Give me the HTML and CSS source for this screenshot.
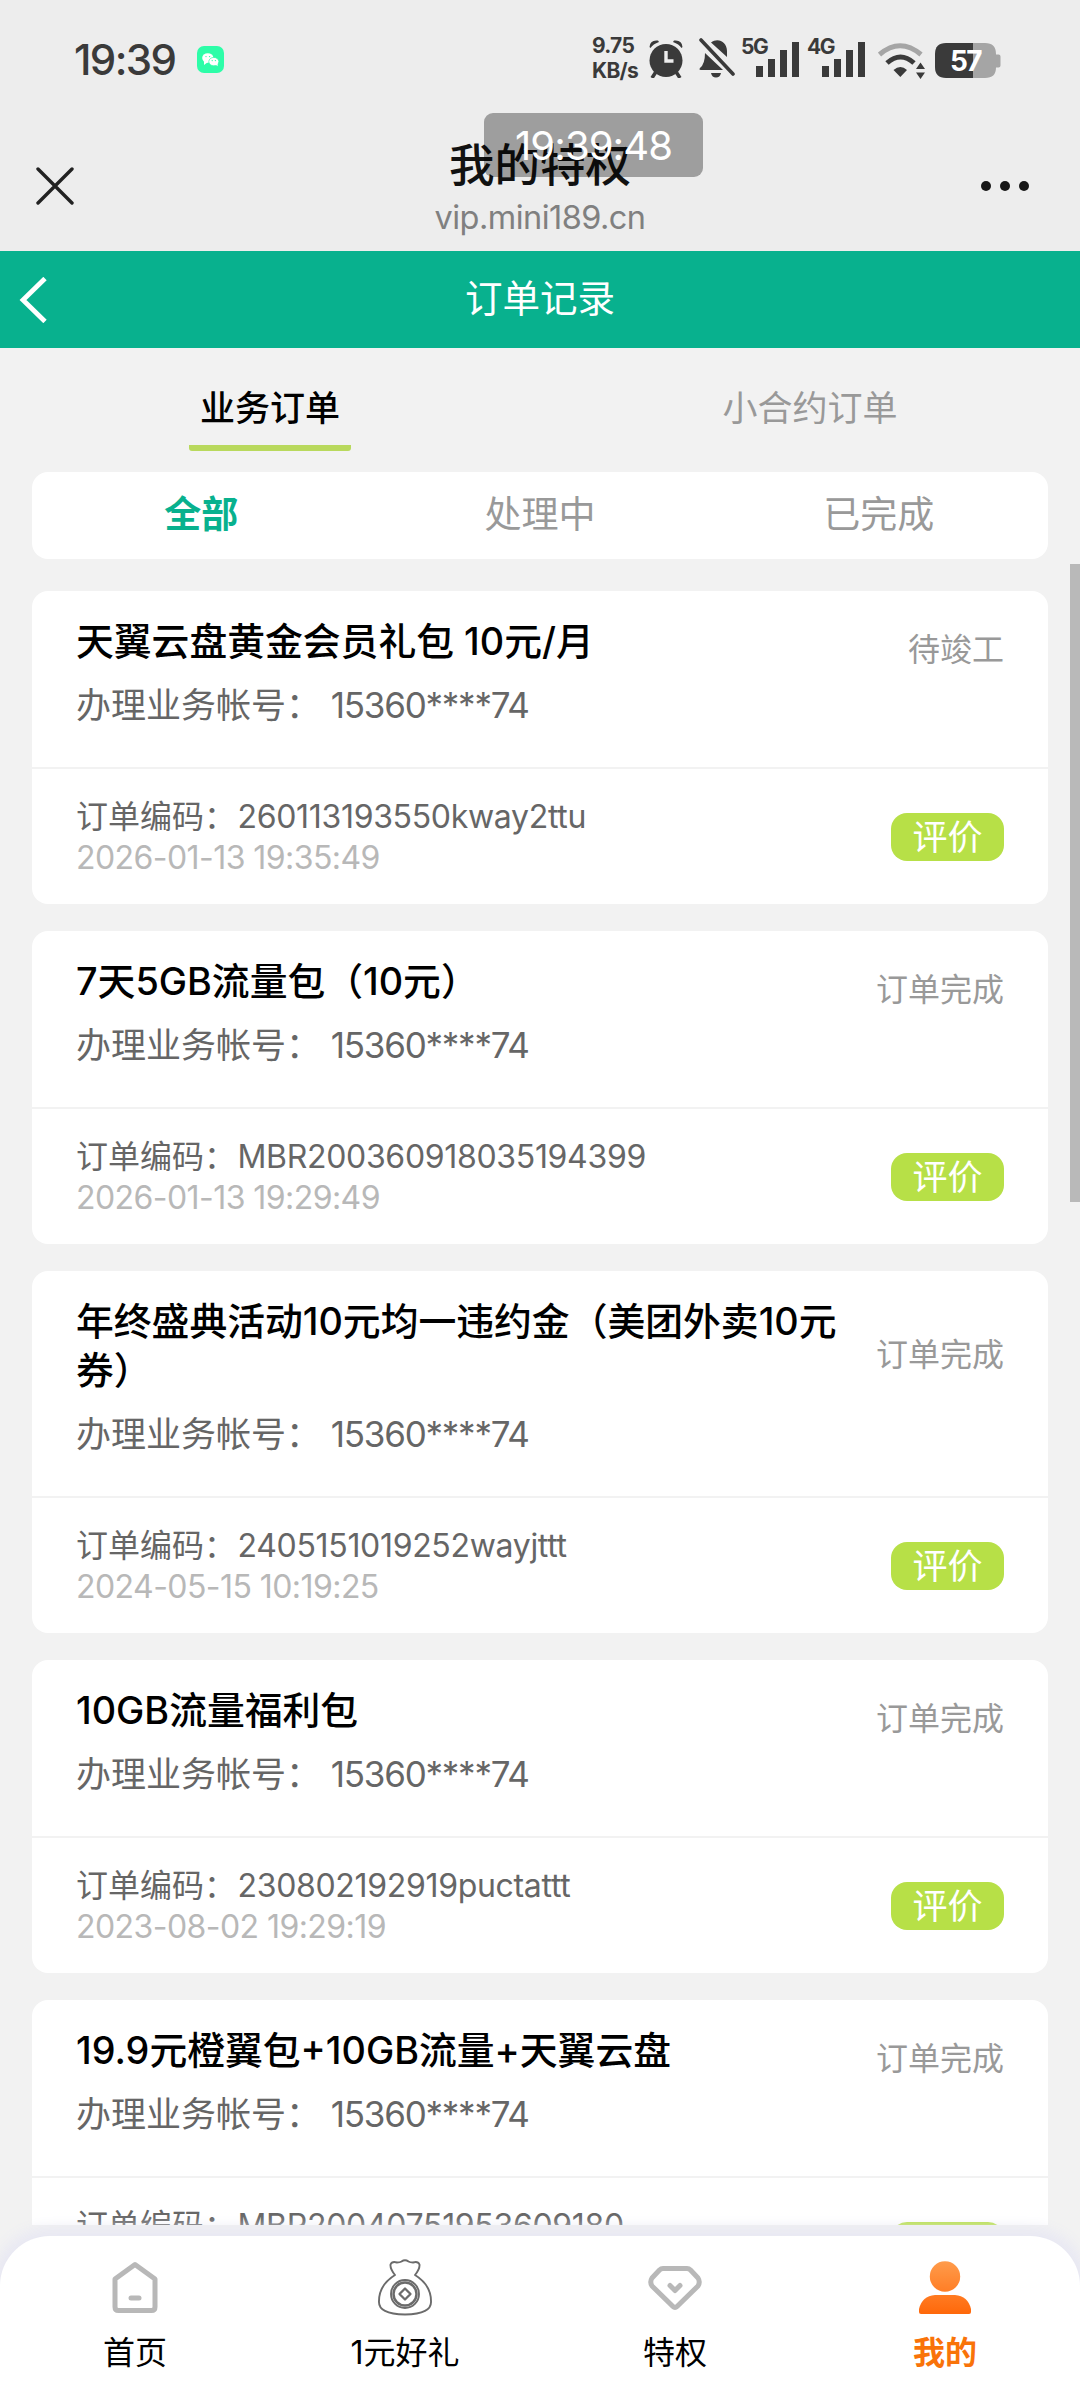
FILE: index.html
```html
<!DOCTYPE html><html lang="zh-CN"><head><meta charset="utf-8"><meta name="viewport" content="width=device-width">
<title>我的特权</title>
<link rel="stylesheet" href="styles.css">
</head>
<body>
<div class="statusbar">
  <span class="clock">19:39</span>
  <svg class="wechat" viewBox="0 0 27 27"><rect width="27" height="27" rx="7" fill="#2dfda8"/><ellipse cx="10.8" cy="12" rx="5.6" ry="4.8" fill="#fff"/><path d="M7 15v4l4-3z" fill="#fff"/><ellipse cx="16.8" cy="15.6" rx="5" ry="4.2" fill="#fff" stroke="#2dfda8" stroke-width=".7"/><path d="M18 18l2.6 2.2V17z" fill="#fff"/><g fill="#2dfda8"><circle cx="9" cy="10.6" r=".7"/><circle cx="12.6" cy="10.6" r=".7"/><circle cx="15.2" cy="14.6" r=".7"/><circle cx="18.4" cy="14.6" r=".7"/></g></svg>
  <div class="speed">9.75<br>KB/s</div>
  <svg class="alarm" viewBox="0 0 34 38"><g fill="#3a3a3a"><circle cx="17" cy="20.5" r="16.5"/><path d="M.5 7Q1-.5 9 .5L10 2Q4 4 1.500 8zM33.500 7Q33-.5 25 .5L24 2Q30 4 32.500 8z"/></g><path d="M6.500 32.500L3 38M27.500 32.500L31 38" stroke="#3a3a3a" stroke-width="3.500"/><path d="M17 11v10h7.500" fill="none" stroke="#ededed" stroke-width="3.400"/></svg>
  <svg class="bell" viewBox="0 0 36 40"><path d="M12 4.500C19-1 28 4 28 13v6zM6 15L24 32H2Q-.5 32 1 30Q6 26 6 15zM12 35h10q-1 4.500-5 4.500T12 35z" fill="#3a3a3a"/><path d="M2 2l32 34" stroke="#3a3a3a" stroke-width="3.600" stroke-linecap="round"/></svg>
  <div class="signal"><span>5G</span><svg viewBox="0 0 44 35"><path d="M0 24h7v11H0zM12 17h7v18h-7zM24 8h7v27h-7zM36 0h7v35h-7z"/></svg></div>
  <div class="signal sim2"><span>4G</span><svg viewBox="0 0 44 35"><path d="M0 24h7v11H0zM12 17h7v18h-7zM24 8h7v27h-7zM36 0h7v35h-7z"/></svg></div>
  <svg class="wifi" viewBox="0 0 48 36"><g fill="none" stroke-width="5"><path d="M1.500 11.500Q22-6 43 11.500" stroke="#a5a5a5"/><path d="M9 20Q22.500 8 36 20" stroke="#3a3a3a"/></g><path d="M15.500 27Q22.500 21 29 27L22.300 34zM38 26l4.500-6.500L47 26zM38 29.500l4.500 6.500L47 29.500z" fill="#3a3a3a"/></svg>
  <svg class="battery" viewBox="0 0 66 36"><path d="M11 0h39q11 0 11 11v.5h2.500q2 0 2 2v9q0 2-2 2H61q0 10.500-11 10.500H38V0z" fill="#a5a5a5"/><path d="M38 0v35H11Q0 35 0 24V11Q0 0 11 0z" fill="#3a3a3a"/><text x="30.500" y="28" text-anchor="middle">57</text></svg>
</div>

<header class="wxbar">
  <svg class="close" viewBox="0 0 38 38"><path d="M2 2l34 34M36 2L2 36" stroke="#222" stroke-width="3.400" stroke-linecap="round"/></svg>
  <div class="site">
    <h1>我的特权</h1>
    <p>vip.mini189.cn</p>
  </div>
  <svg class="more" viewBox="0 0 50 12"><g fill="#161616"><circle cx="6" cy="6" r="5"/><circle cx="25" cy="6" r="5"/><circle cx="44" cy="6" r="5"/></g></svg>
  <div class="toast">19:39:48</div>
</header>

<nav class="titlebar">
  <svg class="back" viewBox="0 0 28 46"><path d="M26 1.500L4 23l22 21.500" fill="none" stroke="#fff" stroke-width="4.800"/></svg>
  <span>订单记录</span>
</nav>

<main class="page">
  <div class="tabs">
    <div class="tab active"><span>业务订单</span></div>
    <div class="tab"><span>小合约订单</span></div>
  </div>
  <div class="filter">
    <span class="active">全部</span>
    <span>处理中</span>
    <span>已完成</span>
  </div>

  <div class="orders">
    <section class="order">
      <div class="head">
        <div class="row"><h2>天翼云盘黄金会员礼包 10元/月</h2><span class="state">待竣工</span></div>
        <p>办理业务帐号： <b>15360****74</b></p>
      </div>
      <div class="foot">
        <div><p>订单编码：<b>260113193550kway2ttu</b></p><time>2026-01-13 19:35:49</time></div>
        <button>评价</button>
      </div>
    </section>
    <section class="order">
      <div class="head">
        <div class="row"><h2>7天5GB流量包（10元）</h2><span class="state">订单完成</span></div>
        <p>办理业务帐号： <b>15360****74</b></p>
      </div>
      <div class="foot">
        <div><p>订单编码：<b>MBR200360918035194399</b></p><time>2026-01-13 19:29:49</time></div>
        <button>评价</button>
      </div>
    </section>
    <section class="order">
      <div class="head">
        <div class="row"><h2>年终盛典活动10元均一违约金（美团外卖10元券）</h2><span class="state">订单完成</span></div>
        <p>办理业务帐号： <b>15360****74</b></p>
      </div>
      <div class="foot">
        <div><p>订单编码：<b>2405151019252wayjttt</b></p><time>2024-05-15 10:19:25</time></div>
        <button>评价</button>
      </div>
    </section>
    <section class="order">
      <div class="head">
        <div class="row"><h2>10GB流量福利包</h2><span class="state">订单完成</span></div>
        <p>办理业务帐号： <b>15360****74</b></p>
      </div>
      <div class="foot">
        <div><p>订单编码：<b>230802192919puctattt</b></p><time>2023-08-02 19:29:19</time></div>
        <button>评价</button>
      </div>
    </section>
    <section class="order">
      <div class="head">
        <div class="row"><h2>19.9元橙翼包+10GB流量+天翼云盘</h2><span class="state">订单完成</span></div>
        <p>办理业务帐号： <b>15360****74</b></p>
      </div>
      <div class="foot">
        <div><p>订单编码：<b>MBR20040751953609180</b></p><time></time></div>
        <button>评价</button>
      </div>
    </section>
  </div>
</main>
<div class="scrollbar"></div>

<footer class="tabbar">
  <a>
    <svg viewBox="0 0 60 60"><g fill="none" stroke="#b8b8b8" stroke-width="5"><path d="M10 22L30 7.500L50 22V50Q50 53.500 46.500 53.500H13.500Q10 53.500 10 50z" stroke-linejoin="round"/><path d="M26 41h8" stroke-linecap="round"/></g></svg>
    首页
  </a>
  <a>
    <svg viewBox="0 0 60 60"><g fill="none" stroke="#6b6b6b" stroke-width="1.900" stroke-linejoin="round"><path d="M20 18Q15 12 15.500 7.500Q17 4 22 5.500Q25 5.500 26.500 4.500Q30 2 33.500 4.500Q35 5.500 38 5.500Q43 4 44.500 7.500Q45 12 40 18Q56 28 56 44Q57 57 30 57.500Q3 57 4 44Q4 28 20 18z"/><circle cx="30" cy="37" r="14"/><circle cx="30" cy="37" r="11.500" stroke-width="2.500"/><path d="M30 31.500l5.500 5.500l-5.500 5.500l-5.500-5.500z" stroke-width="2.300"/></g></svg>
    1元好礼
  </a>
  <a>
    <svg viewBox="0 0 60 60"><g fill="none" stroke="#b8b8b8" stroke-width="5" stroke-linejoin="round" stroke-linecap="round"><path d="M18 11.500H42Q44 11.500 45.500 13L53 21Q55.500 25 53 29L32 49.500Q30 51.500 28 49.500L7 29Q4.500 25 7 21L14.500 13Q16 11.500 18 11.500z"/><path d="M25 28.500l5 5l5-5"/></g></svg>
    特权
  </a>
  <a class="active">
    <svg viewBox="0 0 60 60"><defs><linearGradient id="me" gradientUnits="userSpaceOnUse" x1="0" y1="4" x2="0" y2="57"><stop offset="0" stop-color="#ff9c4c"/><stop offset="1" stop-color="#ff680a"/></linearGradient></defs><g fill="url(#me)"><circle cx="30" cy="19.500" r="15.200"/><path d="M20 38H40Q53 39 56 52V55Q56 57 54 57H6Q4 57 4 55V52Q7 39 20 38z"/></g></svg>
    我的
  </a>
</footer>
</body>
</html>
```
FILE: styles.css
```css
:root {
  --green: #08b18e;
  --lime: #b7e047;
  --gray: #999;
}
* {
  box-sizing: border-box;
  margin: 0;
  padding: 0;
}
body {
  font-family: Inter, "Noto Sans CJK SC", sans-serif;
  width: 1080px;
  height: 2400px;
  overflow: hidden;
  background-color: #f2f2f2;
  display: flex;
  flex-direction: column;
  position: relative;
  text-spacing-trim: space-all;
}
svg {
  display: block;
  flex: none;
}

/* status bar */
.statusbar {
  height: 113px;
  background-color: #ededed;
  display: flex;
  align-items: flex-start;
  padding: 38px 79px 0 74px;
  color: #3a3a3a;
}
.clock {
  width: 123px;
  font-size: 42px;
  line-height: 43px;
  font-weight: 500;
  letter-spacing: -1.600px;
}
.wechat {
  width: 27px;
  height: 27px;
  margin-top: 8px;
}
.speed {
  margin-left: auto;
  width: 57px;
  margin-top: -5px;
  font-size: 21px;
  line-height: 25px;
  font-weight: 700;
  letter-spacing: -.7px;
  white-space: nowrap;
}
.alarm {
  width: 34px;
  height: 38px;
  margin: 2px 16px 0 0;
}
.bell {
  width: 36px;
  height: 40px;
  margin-right: 6px;
}
.signal {
  width: 60px;
  height: 40px;
  fill: #3a3a3a;
  display: flex;
}
.signal span {
  width: 15px;
  font-size: 21px;
  line-height: 17px;
  font-weight: 700;
  letter-spacing: -1.500px;
  white-space: nowrap;
}
.signal svg {
  width: 44px;
  height: 35px;
  margin-top: 4px;
}
.sim2 {
  margin: 0 11px 0 6px;
}
.wifi {
  width: 48px;
  height: 36px;
  margin: 5px 9px 0 0;
}
.battery {
  width: 66px;
  height: 36px;
  margin-top: 5px;
}
.battery text {
  fill: #fff;
  font-size: 28px;
  font-weight: 700;
  letter-spacing: -1.500px;
}

/* browser bar */
.wxbar {
  position: relative;
  height: 138px;
  background-color: #ededed;
  display: flex;
  justify-content: space-between;
  padding: 0 50px 0 36px;
}
.close {
  width: 38px;
  height: 38px;
  margin-top: 54px;
}
.more {
  width: 50px;
  height: 12px;
  margin-top: 67px;
}
.site {
  text-align: center;
  padding: 27px 0 0 26px;
}
.site h1 {
  font-size: 45.500px;
  line-height: 52px;
  font-weight: 500;
  color: #111;
}
.site p {
  font-size: 32.500px;
  line-height: 52px;
  letter-spacing: -.55px;
  color: #808080;
}
.toast {
  position: absolute;
  left: 484px;
  top: 0;
  width: 219px;
  height: 64px;
  border-radius: 9px;
  background-color: rgba(0, 0, 0, .335);
  color: #fff;
  font-size: 40px;
  line-height: 66px;
  text-align: center;
  letter-spacing: -.9px;
}

.titlebar {
  height: 97px;
  padding-bottom: 3px;
  background-color: var(--green);
  color: #fff;
  font-size: 37.500px;
  line-height: 93px;
  display: flex;
  align-items: center;
  justify-content: center;
}
.back {
  width: 28px;
  height: 46px;
  margin: 3px auto 0 19px;
}
.titlebar span {
  margin-right: auto;
  padding-right: 47px;
}

.page {
  height: 1877px;
  overflow: hidden;
}
.tabs {
  display: flex;
  height: 124px;
  padding-top: 32px;
}
.tab {
  flex: 1;
  text-align: center;
  font-size: 35px;
  line-height: 56px;
  color: var(--gray);
}
.tab span {
  display: inline-block;
  padding: 0 11px 9px;
}
.tab.active span {
  color: #000;
  font-weight: 500;
  border-bottom: 6px solid #b9d95d;
  border-radius: 3px;
}
.filter {
  display: flex;
  height: 87px;
  margin: 0 32px 32px;
  background-color: #fff;
  border-radius: 16px;
  font-size: 37px;
  line-height: 86px;
  color: var(--gray);
}
.filter span {
  flex: 1;
  text-align: center;
}
.filter .active {
  color: var(--green);
  font-weight: 700;
}

/* order list */
.orders {
  margin: 0 32px;
}
.order {
  margin-bottom: 27px;
  background-color: #fff;
  border-radius: 16px;
}
.head {
  padding: 26px 44px 41px;
}
.row {
  display: flex;
  align-items: center;
}
.row h2 {
  flex: 1;
  padding-right: 20px;
  font-size: 37.800px;
  line-height: 49px;
  font-weight: 500;
  color: #000;
}
.state {
  padding-top: 16px;
  font-size: 32px;
  line-height: 33px;
  color: var(--gray);
}
.head p {
  margin-top: 19px;
  font-size: 35px;
  line-height: 41px;
  color: #666;
}
b {
  font-weight: 400;
}
.head b {
  letter-spacing: -1.250px;
}
.foot {
  display: flex;
  align-items: center;
  justify-content: space-between;
  height: 137px;
  padding: 0 44px;
  border-top: 2px solid #f2f2f2;
}
.foot p,
.foot time {
  display: block;
  height: 41px;
  font-size: 32px;
  line-height: 41px;
  color: #666;
}
.foot b {
  margin-left: 1.500px;
  letter-spacing: -.320px;
}
.foot time {
  color: #b8b8b8;
  letter-spacing: -.560px;
}
button {
  width: 113px;
  height: 48px;
  border: none;
  border-radius: 16px;
  background-color: var(--lime);
  color: #fff;
  font: inherit;
  font-size: 35px;
  line-height: 46px;
}

.scrollbar {
  position: absolute;
  right: 0;
  top: 564px;
  width: 10px;
  height: 638px;
  background-color: #b9b9b9;
}

.tabbar {
  display: flex;
  flex: none;
  height: 164px;
  margin-top: 11px;
  padding-top: 21px;
  background-color: #fff;
  border-radius: 50px 50px 0 0;
  box-shadow: 0 0 14px 8px #e8e8f3;
}
.tabbar a {
  flex: 1;
  text-align: center;
  font-size: 32px;
  line-height: 71px;
  color: #000;
}
.tabbar svg {
  width: 60px;
  height: 60px;
  margin: 0 auto;
}
.tabbar .active {
  color: #f97309;
  font-weight: 700;
}
```
